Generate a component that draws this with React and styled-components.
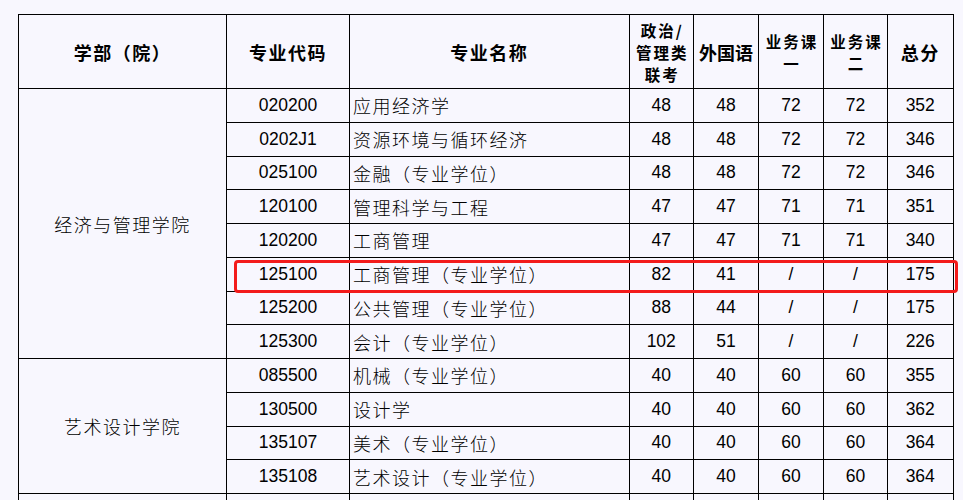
import React from 'react';
import styled, { createGlobalStyle } from 'styled-components';

const GlobalStyle = createGlobalStyle`
  html, body {
    margin: 0;
    padding: 0;
    background: #f8f7fe;
    overflow: hidden;
  }
`;

const groups = [
  {
    dept: '经济与管理学院',
    rows: [
      ['020200', '应用经济学', '48', '48', '72', '72', '352'],
      ['0202J1', '资源环境与循环经济', '48', '48', '72', '72', '346'],
      ['025100', '金融（专业学位）', '48', '48', '72', '72', '346'],
      ['120100', '管理科学与工程', '47', '47', '71', '71', '351'],
      ['120200', '工商管理', '47', '47', '71', '71', '340'],
      ['125100', '工商管理（专业学位）', '82', '41', '/', '/', '175'],
      ['125200', '公共管理（专业学位）', '88', '44', '/', '/', '175'],
      ['125300', '会计（专业学位）', '102', '51', '/', '/', '226'],
    ],
  },
  {
    dept: '艺术设计学院',
    rows: [
      ['085500', '机械（专业学位）', '40', '40', '60', '60', '355'],
      ['130500', '设计学', '40', '40', '60', '60', '362'],
      ['135107', '美术（专业学位）', '40', '40', '60', '60', '364'],
      ['135108', '艺术设计（专业学位）', '40', '40', '60', '60', '364'],
    ],
  },
];

const widths = [208, 123, 279.5, 64.5, 65, 65, 64, 65.5];

const Page = styled.div`
  padding: 14px 0 0 18px;
  height: 486px;
  overflow: hidden;
`;

const Wrap = styled.div`
  position: relative;
  width: 934.5px;
`;

const Table = styled.table`
  border-collapse: collapse;
  table-layout: fixed;
  width: 934.5px;
  color: #000;
`;

const HeadCell = styled.th`
  height: 73px;
  padding: 0;
  border: 1px solid #000;
  text-align: center;
  vertical-align: middle;
  font-family: "Noto Sans CJK SC", sans-serif;
  font-weight: 700;
  font-size: 18px;
  line-height: 22px;
  letter-spacing: ${p => (p.$tight ? '0' : '1.5px')};
`;

const HeadLine = styled.span`
  display: block;
  font-size: 15.5px;
  line-height: 22px;
  letter-spacing: 2px;
  margin-right: -2px;
`;

const Cell = styled.td`
  height: 32.75px;
  padding: 0 0 0 ${p => (p.$left ? '3px' : '0')};
  border: 1px solid #000;
  text-align: ${p => (p.$left ? 'left' : 'center')};
  vertical-align: middle;
  white-space: nowrap;
  font-family: ${p =>
    p.$cjk
      ? '"Noto Sans CJK SC", sans-serif'
      : '"Liberation Sans", Arial, sans-serif'};
  font-weight: ${p => (p.$cjk ? 300 : 400)};
  font-size: ${p => (p.$cjk ? '18px' : '17.5px')};
  letter-spacing: ${p => (p.$cjk ? '1.5px' : '0')};
`;

const DeptCell = styled(Cell)`
  padding: 0;
`;

const Highlight = styled.div`
  position: absolute;
  left: 216px;
  top: 246px;
  width: 724px;
  height: 33px;
  box-sizing: border-box;
  border: 3px solid #f31b1b;
  border-radius: 4px;
  pointer-events: none;
`;

const Lines = ({ items }) => items.map(t => <HeadLine key={t}>{t}</HeadLine>);

export default function App() {
  return (
    <Page>
      <GlobalStyle />
      <Wrap>
        <Table>
          <colgroup>
            {widths.map((w, i) => (
              <col key={i} style={{ width: w }} />
            ))}
          </colgroup>
          <thead>
            <tr>
              <HeadCell>学部（院）</HeadCell>
              <HeadCell>专业代码</HeadCell>
              <HeadCell>专业名称</HeadCell>
              <HeadCell $tight>
                <Lines items={['政治/', '管理类', '联考']} />
              </HeadCell>
              <HeadCell $tight>外国语</HeadCell>
              <HeadCell $tight>
                <Lines items={['业务课', '一']} />
              </HeadCell>
              <HeadCell $tight>
                <Lines items={['业务课', '二']} />
              </HeadCell>
              <HeadCell>总分</HeadCell>
            </tr>
          </thead>
          <tbody>
            {groups.map(g =>
              g.rows.map((r, i) => (
                <tr key={r[0]}>
                  {i === 0 && (
                    <DeptCell $cjk rowSpan={g.rows.length}>
                      {g.dept}
                    </DeptCell>
                  )}
                  <Cell>{r[0]}</Cell>
                  <Cell $cjk $left>
                    {r[1]}
                  </Cell>
                  {r.slice(2).map((v, j) => (
                    <Cell key={j}>{v}</Cell>
                  ))}
                </tr>
              ))
            )}
            <tr>
              {widths.map((w, i) => (
                <Cell key={i} />
              ))}
            </tr>
          </tbody>
        </Table>
        <Highlight />
      </Wrap>
    </Page>
  );
}
